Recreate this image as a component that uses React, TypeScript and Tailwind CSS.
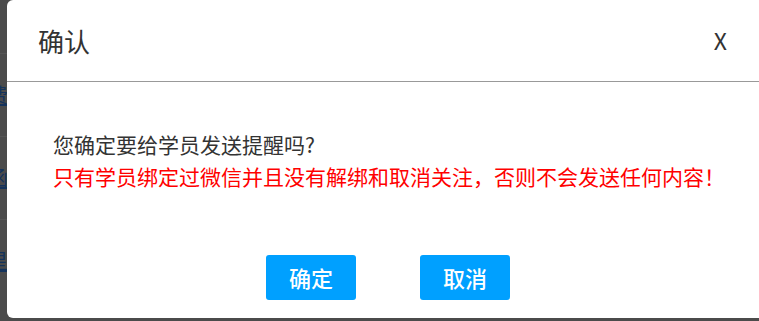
import React from 'react';

const FONT = { fontFamily: '"Noto Sans CJK SC", "Noto Sans", sans-serif' };

const PAGE_ROWS = ['费', '函', '星'];

export default function App() {
  return (
    <div className="relative w-[759px] h-[321px] overflow-hidden bg-[#4b4b4b]" style={FONT}>
      {/* page behind the overlay */}
      <div className="flex flex-col pt-[53px]">
        {PAGE_ROWS.map((ch) => (
          <div key={ch} className="h-[83px] border-t border-[#555] flex items-center -ml-[12px] text-[20px] text-[#14335c] underline">
            {ch}
          </div>
        ))}
      </div>

      {/* Dialog */}
      <div className="absolute left-[7px] top-0 w-[762px] h-[318px] bg-white rounded-[6px] flex flex-col">
        <div className="h-[82px] flex items-center justify-between border-b border-[#999] pl-[31px] pr-[42px]">
          <span className="text-[26px] text-[#333] leading-none">确认</span>
          <span className="text-[23px] text-[#333] leading-none">X</span>
        </div>
        <div className="pt-[46px] pl-[46px] text-[21px] leading-[32px]">
          <p className="text-[#333]">您确定要给学员发送提醒吗?</p>
          <p className="text-[#ff0000]">只有学员绑定过微信并且没有解绑和取消关注，否则不会发送任何内容！</p>
        </div>
        <div className="flex justify-center gap-[64px] mt-[63px]">
          <button className="w-[90px] h-[45px] rounded-[3px] bg-[#00a0ff] text-white text-[22px] font-medium">确定</button>
          <button className="w-[90px] h-[45px] rounded-[3px] bg-[#00a0ff] text-white text-[22px] font-medium">取消</button>
        </div>
      </div>
    </div>
  );
}
